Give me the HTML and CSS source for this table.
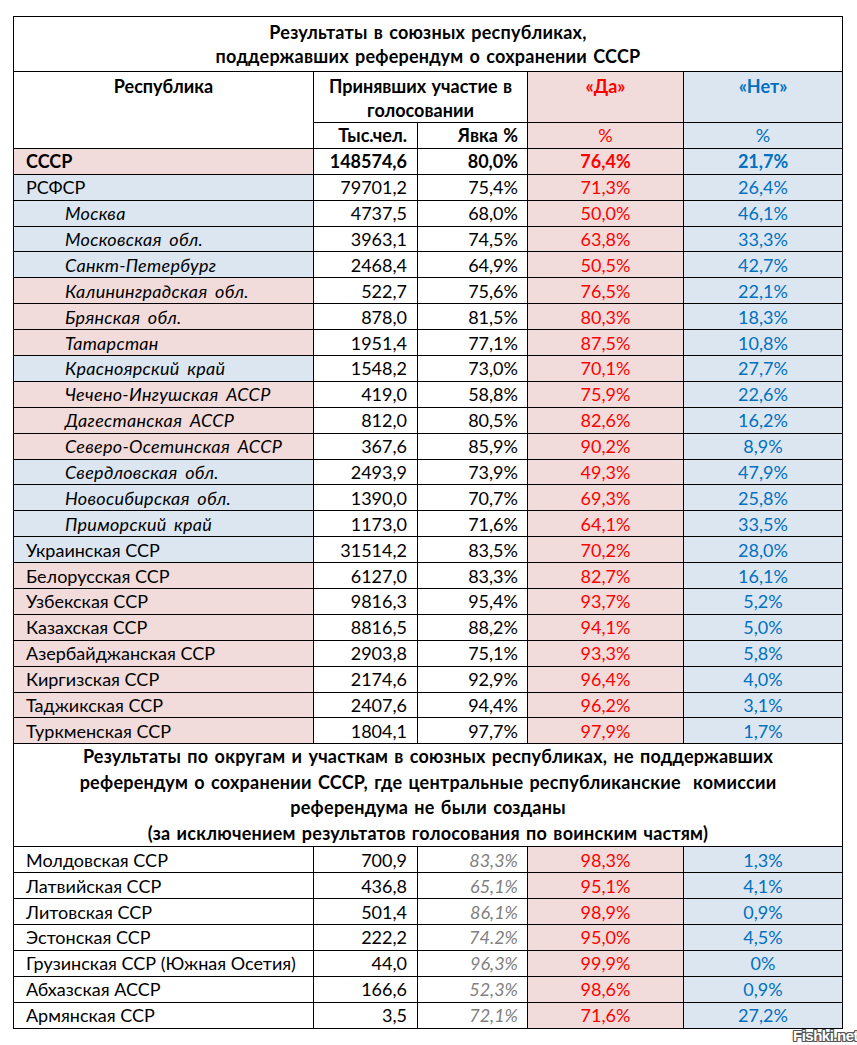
FILE: index.html
```html
<!DOCTYPE html>
<html lang="ru">
<head>
<meta charset="utf-8">
<title>Референдум о сохранении СССР</title>
<link rel="stylesheet" href="styles.css">
</head>
<body>
<div class="page">
<table class="results">
  <colgroup>
    <col class="c-name"><col class="c-num"><col class="c-turn"><col class="c-yes"><col class="c-no">
  </colgroup>
  <tbody>
    <tr class="title-row">
      <td colspan="5" class="title">Результаты в союзных республиках,<br>поддержавших референдум о сохранении СССР</td>
    </tr>
    <tr class="head-row">
      <td rowspan="2" class="head center">Республика</td>
      <td colspan="2" class="head center">Принявших участие в<br>голосовании</td>
      <td class="head center yes-h">«Да»</td>
      <td class="head center no-h">«Нет»</td>
    </tr>
    <tr class="row">
      <td class="head num">Тыс.чел.</td>
      <td class="head num">Явка %</td>
      <td class="yes-c center">%</td>
      <td class="no-c center">%</td>
    </tr>
    <tr class="row bold"><td class="name pink">СССР</td><td class="num">148574,6</td><td class="num">80,0%</td><td class="yes">76,4%</td><td class="no">21,7%</td></tr>
    <tr class="row"><td class="name blue">РСФСР</td><td class="num">79701,2</td><td class="num">75,4%</td><td class="yes">71,3%</td><td class="no">26,4%</td></tr>
    <tr class="row"><td class="name blue sub">Москва</td><td class="num">4737,5</td><td class="num">68,0%</td><td class="yes">50,0%</td><td class="no">46,1%</td></tr>
    <tr class="row"><td class="name blue sub">Московская обл.</td><td class="num">3963,1</td><td class="num">74,5%</td><td class="yes">63,8%</td><td class="no">33,3%</td></tr>
    <tr class="row"><td class="name blue sub">Санкт-Петербург</td><td class="num">2468,4</td><td class="num">64,9%</td><td class="yes">50,5%</td><td class="no">42,7%</td></tr>
    <tr class="row"><td class="name pink sub">Калининградская обл.</td><td class="num">522,7</td><td class="num">75,6%</td><td class="yes">76,5%</td><td class="no">22,1%</td></tr>
    <tr class="row"><td class="name pink sub">Брянская обл.</td><td class="num">878,0</td><td class="num">81,5%</td><td class="yes">80,3%</td><td class="no">18,3%</td></tr>
    <tr class="row"><td class="name pink sub">Татарстан</td><td class="num">1951,4</td><td class="num">77,1%</td><td class="yes">87,5%</td><td class="no">10,8%</td></tr>
    <tr class="row"><td class="name blue sub">Красноярский край</td><td class="num">1548,2</td><td class="num">73,0%</td><td class="yes">70,1%</td><td class="no">27,7%</td></tr>
    <tr class="row"><td class="name pink sub">Чечено-Ингушская АССР</td><td class="num">419,0</td><td class="num">58,8%</td><td class="yes">75,9%</td><td class="no">22,6%</td></tr>
    <tr class="row"><td class="name pink sub">Дагестанская АССР</td><td class="num">812,0</td><td class="num">80,5%</td><td class="yes">82,6%</td><td class="no">16,2%</td></tr>
    <tr class="row"><td class="name pink sub">Северо-Осетинская АССР</td><td class="num">367,6</td><td class="num">85,9%</td><td class="yes">90,2%</td><td class="no">8,9%</td></tr>
    <tr class="row"><td class="name blue sub">Свердловская обл.</td><td class="num">2493,9</td><td class="num">73,9%</td><td class="yes">49,3%</td><td class="no">47,9%</td></tr>
    <tr class="row"><td class="name blue sub">Новосибирская обл.</td><td class="num">1390,0</td><td class="num">70,7%</td><td class="yes">69,3%</td><td class="no">25,8%</td></tr>
    <tr class="row"><td class="name blue sub">Приморский край</td><td class="num">1173,0</td><td class="num">71,6%</td><td class="yes">64,1%</td><td class="no">33,5%</td></tr>
    <tr class="row"><td class="name blue">Украинская ССР</td><td class="num">31514,2</td><td class="num">83,5%</td><td class="yes">70,2%</td><td class="no">28,0%</td></tr>
    <tr class="row"><td class="name pink">Белорусская ССР</td><td class="num">6127,0</td><td class="num">83,3%</td><td class="yes">82,7%</td><td class="no">16,1%</td></tr>
    <tr class="row"><td class="name pink">Узбекская ССР</td><td class="num">9816,3</td><td class="num">95,4%</td><td class="yes">93,7%</td><td class="no">5,2%</td></tr>
    <tr class="row"><td class="name pink">Казахская ССР</td><td class="num">8816,5</td><td class="num">88,2%</td><td class="yes">94,1%</td><td class="no">5,0%</td></tr>
    <tr class="row"><td class="name pink">Азербайджанская ССР</td><td class="num">2903,8</td><td class="num">75,1%</td><td class="yes">93,3%</td><td class="no">5,8%</td></tr>
    <tr class="row"><td class="name pink">Киргизская ССР</td><td class="num">2174,6</td><td class="num">92,9%</td><td class="yes">96,4%</td><td class="no">4,0%</td></tr>
    <tr class="row"><td class="name pink">Таджикская ССР</td><td class="num">2407,6</td><td class="num">94,4%</td><td class="yes">96,2%</td><td class="no">3,1%</td></tr>
    <tr class="row"><td class="name pink">Туркменская ССР</td><td class="num">1804,1</td><td class="num">97,7%</td><td class="yes">97,9%</td><td class="no">1,7%</td></tr>
    <tr class="section-row">
      <td colspan="5" class="section">Результаты по округам и участкам в союзных республиках, не поддержавших<br>референдум о сохранении СССР, где центральные республиканские&nbsp; комиссии<br>референдума не были созданы<br>(за исключением результатов голосования по воинским частям)</td>
    </tr>
    <tr class="row"><td class="name">Молдовская ССР</td><td class="num">700,9</td><td class="num gray">83,3%</td><td class="yes">98,3%</td><td class="no">1,3%</td></tr>
    <tr class="row"><td class="name">Латвийская ССР</td><td class="num">436,8</td><td class="num gray">65,1%</td><td class="yes">95,1%</td><td class="no">4,1%</td></tr>
    <tr class="row"><td class="name">Литовская ССР</td><td class="num">501,4</td><td class="num gray">86,1%</td><td class="yes">98,9%</td><td class="no">0,9%</td></tr>
    <tr class="row"><td class="name">Эстонская ССР</td><td class="num">222,2</td><td class="num gray">74.2%</td><td class="yes">95,0%</td><td class="no">4,5%</td></tr>
    <tr class="row"><td class="name">Грузинская ССР (Южная Осетия)</td><td class="num">44,0</td><td class="num gray">96,3%</td><td class="yes">99,9%</td><td class="no">0%</td></tr>
    <tr class="row"><td class="name">Абхазская АССР</td><td class="num">166,6</td><td class="num gray">52,3%</td><td class="yes">98,6%</td><td class="no">0,9%</td></tr>
    <tr class="row"><td class="name">Армянская ССР</td><td class="num">3,5</td><td class="num gray">72,1%</td><td class="yes">71,6%</td><td class="no">27,2%</td></tr>
  </tbody>
</table>
<div class="watermark">Fishki.net</div>
</div>
</body>
</html>
```
FILE: styles.css
```css
html, body {
  margin: 0;
  padding: 0;
  background: #ffffff;
}
body {
  font-family: Lato, "Open Sans", sans-serif;
  color: #000000;
}
.page {
  position: relative;
  width: 857px;
  height: 1045px;
  padding: 16px 0 0 13px;
  box-sizing: border-box;
}
.results {
  border-collapse: collapse;
  table-layout: fixed;
  width: 829px;
  font-size: 18px;
}
.c-name { width: 300px; }
.c-num { width: 104px; }
.c-turn { width: 110px; }
.c-yes { width: 156px; }
.c-no { width: 159px; }

.results td {
  border: 1px solid #000000;
  padding: 0;
  white-space: nowrap;
  line-height: 24px;
}
.title-row { height: 55px; }
.title {
  text-align: center;
  font-weight: bold;
  vertical-align: middle;
  letter-spacing: 0.25px;
  word-spacing: 1.5px;
}
.head-row { height: 51px; }
.head {
  font-weight: bold;
  vertical-align: top;
  padding-top: 2px !important;
  word-spacing: 1px;
}
.row { height: 25.9px; }
.row td { vertical-align: middle; }
.row .head { vertical-align: middle; padding-top: 0 !important; }
.center { text-align: center; }
.name { padding-left: 12px !important; }
.name.sub {
  padding-left: 51px !important;
  font-style: italic;
  letter-spacing: 0.3px;
  word-spacing: 3px;
}
.pink { background: #f2dcdb; }
.blue { background: #dce6f1; }
.num { text-align: right; padding-right: 10px !important; }
.row td.num:nth-child(3), .row td.head.num:nth-child(2) { padding-right: 9px !important; }
.yes, .yes-c, .yes-h {
  background: #f2dcdb;
  color: #ff0000;
  text-align: center;
}
.no, .no-c, .no-h {
  background: #dce6f1;
  color: #0070c0;
  text-align: center;
}
.bold td { font-weight: bold; }
.gray { color: #7f7f7f; font-style: italic; }
.section-row { height: 103px; }
.section {
  text-align: center;
  font-weight: bold;
  line-height: 25.5px !important;
  vertical-align: middle;
  letter-spacing: 0.25px;
  word-spacing: 1.5px;
}
.watermark {
  position: absolute;
  left: 793px;
  top: 1027px;
  font-family: "Liberation Sans", Arial, sans-serif;
  font-weight: bold;
  font-size: 15px;
  letter-spacing: -0.5px;
  color: #ffffff;
  text-shadow: 1px 0 0 #555, -1px 0 0 #555, 0 1px 0 #555, 0 -1px 0 #555, 1px 1px 0 #555, -1px -1px 0 #555, 1px -1px 0 #555, -1px 1px 0 #555;
}
```
